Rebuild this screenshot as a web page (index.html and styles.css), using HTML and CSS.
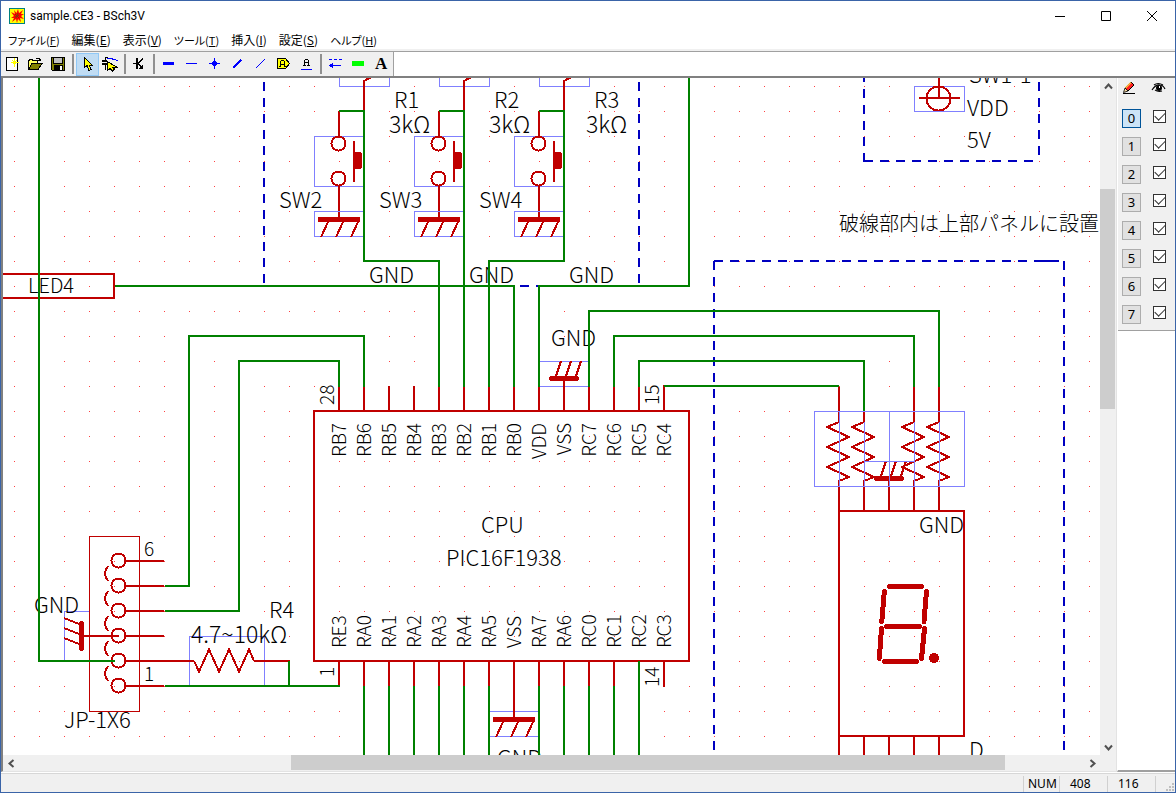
FILE: index.html
```html
<!DOCTYPE html>
<html lang="ja">
<head>
<meta charset="utf-8">
<title>sample.CE3 - BSch3V</title>
<link rel="stylesheet" href="styles.css">
</head>
<body>
<div class="window">
  <header class="titlebar">
    <svg class="app-icon" width="16" height="16" viewBox="0 0 16 16">
      <rect x=".5" y=".5" width="15" height="15" fill="#ffff00" stroke="#008080"/>
      <path d="M2 4l4 2-1-4 2.500 3L9 1l1 4 4-3-2 4 3 0-3 2 3 3-4-1 1 4-3-3-1 4-1-4-4 3 2-4-3 0 3-2z" fill="#ff0000"/>
      <path d="M6 6l4 4M9 5l-2 5M6 9l4-2" stroke="#804000" fill="none"/>
    </svg>
    <h1 class="title">sample.CE3 - BSch3V</h1>
    <div class="win-controls">
      <button type="button" aria-label="最小化"><svg width="12" height="12" viewBox="0 0 12 12"><path d="M1 6.500h10" stroke="#000"/></svg></button>
      <button type="button" aria-label="最大化"><svg width="12" height="12" viewBox="0 0 12 12"><path d="M1.500 1.500h9v9h-9z" stroke="#000" fill="none"/></svg></button>
      <button type="button" aria-label="閉じる"><svg width="12" height="12" viewBox="0 0 12 12"><path d="M1 1l10 10M11 1L1 11" stroke="#000"/></svg></button>
    </div>
  </header>
  <nav class="menubar">
    <button type="button" class="kana">ファイル(<u>F</u>)</button>
    <button type="button">編集(<u>E</u>)</button>
    <button type="button">表示(<u>V</u>)</button>
    <button type="button" class="kana">ツール(<u>T</u>)</button>
    <button type="button">挿入(<u>I</u>)</button>
    <button type="button">設定(<u>S</u>)</button>
    <button type="button" class="kana">ヘルプ(<u>H</u>)</button>
  </nav>
  <div class="toolrow">
    <div class="toolbar" role="toolbar">
      <button type="button" aria-label="新規"><svg viewBox="0 0 16 16"><path d="M2.500 1.500h11v13h-11z" fill="#fff" stroke="#000"/><path d="M10.500 2v9M7 6.500h8M8.500 4.500l4 4M12.500 4.500l-4 4" stroke="#ffff00"/></svg></button>
      <button type="button" aria-label="開く"><svg viewBox="0 0 16 16"><path d="M1.500 13.500v-9h1v-1h3v1h5v3" fill="#ffff60" stroke="#000"/><path d="M1.500 13.500l3.500-6h10l-4 6z" fill="#808000" stroke="#000"/><path d="M9 2.500h3l1 1v1M11 4.500h3" fill="none" stroke="#000"/></svg></button>
      <button type="button" aria-label="保存"><svg viewBox="0 0 16 16"><path d="M1.500 1.500h13v13H2.500l-1-1z" fill="#808000" stroke="#000"/><path d="M4 2h8v5H4z" fill="#c0c0c0"/><path d="M4 9h9v5H4z" fill="#000"/><path d="M10 10h2v4h-2z" fill="#fff"/><path d="M3.500 2v5.500h9V2" stroke="#000" fill="none"/></svg></button>
      <span class="sep"></span>
      <button type="button" class="active" aria-label="選択"><svg viewBox="0 0 16 16"><path d="M5.500 1.500v10l2.500-2 2 5 2-1-2-4.500h3z" fill="#ffff00" stroke="#000"/></svg></button>
      <button type="button" aria-label="ドラッグ"><svg viewBox="0 0 16 16"><path d="M0 5h5M0 8h5" stroke="#000" stroke-width="2"/><path d="M3.500 5V1.500H6M3.500 8v6" stroke="#000" fill="none"/><path d="M5 2.500h4l3 1 4 1" stroke="#0000ff" fill="none"/><path d="M5.500 5.500v9l2.500-2 2.500 2.500 2-2-2-2h4z" fill="#ffff00" stroke="#000"/></svg></button>
      <span class="sep"></span>
      <button type="button" aria-label="部品"><svg viewBox="0 0 16 16"><path d="M5 2h2v11H5zM2 7h3v1H2z" fill="#000"/><path d="M7 7.500l5-5M7 7.500l5 5" stroke="#000"/><path d="M12 8v5H7z" fill="#000"/></svg></button>
      <span class="sep"></span>
      <button type="button" aria-label="バス"><svg viewBox="0 0 16 16"><path d="M3 6h11v3H3z" fill="#0000ff"/></svg></button>
      <button type="button" aria-label="ワイヤ"><svg viewBox="0 0 16 16"><path d="M3 7.500h11" stroke="#0000ff"/></svg></button>
      <button type="button" aria-label="ジャンクション"><svg viewBox="0 0 16 16"><path d="M3 7.500h11M8.500 2v11" stroke="#0000ff"/><circle cx="8.500" cy="7.500" r="2.500" fill="#0000ff"/></svg></button>
      <button type="button" aria-label="バスエントリ"><svg viewBox="0 0 16 16"><path d="M4 12l8-8" stroke="#0000ff" stroke-width="2.500"/></svg></button>
      <button type="button" aria-label="エントリ"><svg viewBox="0 0 16 16"><path d="M4 12l9-9" stroke="#0000ff"/></svg></button>
      <button type="button" aria-label="タグ"><svg viewBox="0 0 16 16"><path d="M2.500 2.500h8l4 5-4 5h-8z" fill="#ffff00" stroke="#000"/><path d="M5 5h1v6H5zM9 5h1v6H9zM6 4h3v1H6zM6 8h3v1H6zM4 10h2v1H4zM9 10h2v1H9z" fill="#000"/></svg></button>
      <button type="button" aria-label="ラベル"><svg viewBox="0 0 16 16"><path d="M6 4h1v6H6zM10 4h1v6h-1zM7 3h3v1H7zM7 6h3v1H7zM5 9h3v1H5zM9 9h3v1H9z" fill="#000"/><path d="M3 13.500h11" stroke="#0000ff"/></svg></button>
      <span class="sep"></span>
      <button type="button" aria-label="破線"><svg viewBox="0 0 16 16"><path d="M2 3.500h13" stroke="#0000ff" stroke-dasharray="3 2"/><path d="M3 9.500h11" stroke="#0000ff"/><path d="M2 9.500l4-3v6z" fill="#0000ff"/></svg></button>
      <button type="button" aria-label="塗り"><svg viewBox="0 0 16 16"><path d="M2 5h12v5H2z" fill="#00ff00"/></svg></button>
      <button type="button" class="text-tool" aria-label="文字">A</button>
    </div>
  </div>
  <main class="workspace">
    <section class="view">
      <div class="canvas-row">
        <svg class="sheet" aria-label="回路図">
          <defs>
            <pattern id="grid" x="14" y="11" width="25" height="25" patternUnits="userSpaceOnUse"><rect width="1" height="1" fill="#ff4040"/></pattern>
            <g id="gnd"><path class="frame" d="M-24.500 -5.500h50v25h-50z"/><path class="bar" d="M-21 2.500h42"/><path class="hatch" d="M-11 5l-7 15M4 5l-7 15M19 5l-7 15"/></g>
            <g id="gnd-up"><path class="hatch" d="M-3 -17l-5 15M7 -17l-5 15M17 -17l-5 15"/><path class="bar round" d="M-12.500 .500h25"/></g>
            <g id="switch"><path class="frame" d="M-24.500 .500h50v50h-50z"/><path class="red" d="M0 -25V1M0 49V81M15 5v41"/><circle class="ring" cx="-.500" cy="7.500" r="7"/><circle class="ring" cx="-.500" cy="42.500" r="7"/><path class="solid" d="M15 16h7l1 2v13l-1 2h-7z"/></g>
            <path id="res-v" class="zig" d="M0 0v1l-12 5 22 10-22 10 22 10-22 10 22 10-10 4v30"/>
            <g id="stub"><path class="frame" d="M-24.500 -10v18.500h50V-10"/><path class="red" d="M0 33V3l11 -6"/></g>
            <g id="pin"><circle class="ring" cx="-.500" cy="-.500" r="7"/><path class="red" d="M7 0h38"/></g>
            <path id="arc" class="ring" d="M4 0Q-2 7.500 4 15"/>
          </defs>
          <g transform="translate(-3,-78)">
            <rect width="4000" height="3000" fill="url(#grid)"/>
            <g class="dash">
              <path d="M264 66V285M639 66V285"/><path d="M520 286h9M536 286h4"/>
              <path d="M864 73V162M864 161h175M1039 66V156"/>
              <path d="M714 261h350M714 261V2000M1064 261V2000"/><path class="joined" d="M1035 261h21"/>
            </g>
            <use href="#stub" x="364" y="78"/><use href="#stub" x="464" y="78"/><use href="#stub" x="564" y="78"/>
            <use href="#switch" x="339" y="136"/><use href="#switch" x="439" y="136"/><use href="#switch" x="539" y="136"/>
            <use href="#gnd" x="339" y="217"/><use href="#gnd" x="439" y="217"/><use href="#gnd" x="539" y="217"/>
            <use href="#gnd" x="514" y="717"/>
            <path class="frame" d="M539.500 361.500h50v25h-50zM64.500 611.500h25v49h-25zM189.500 636.500h75v50h-75zM914.500 86.500h50v25h-50z"/>
            <path class="red" d="M-5 274H114V298H-5M314 411H689V661H314ZM839 510V800M839 511H964V736H839M864 736v60M889 736v60M914 736v60M939 736v60"/>
            <path class="red" d="M339 386v25M364 386v25M389 386v25M414 386v25M439 386v25M464 386v25M489 386v25M514 386v25M539 386v25M564 380v31M589 386v25M614 386v25M639 386v25M664 385v26"/>
            <path class="red" d="M339 661v25M364 661v25M389 661v25M414 661v25M439 661v25M464 661v25M489 661v25M514 661v57M539 661v25M564 661v25M589 661v25M614 661v25M664 661v26"/>
            <path class="red" d="M839 387v34M864 411v10M914 387v34M939 387v34M889 480v31M939 78v20M919 98h41M84 636h35M164 661h30M254 661h36"/>
            <g class="labels">
              <text x="969" y="83">SW1-1</text><text x="967" y="116">VDD</text><text x="967" y="148">5V</text>
              <text x="394" y="108">R1</text><text x="494" y="108">R2</text><text x="594" y="108">R3</text>
              <text x="389" y="133" class="value">3kΩ</text><text x="489" y="133" class="value">3kΩ</text><text x="586" y="133" class="value">3kΩ</text>
              <text x="279" y="208">SW2</text><text x="379" y="208">SW3</text><text x="479" y="208">SW4</text>
              <text x="369" y="283">GND</text><text x="469" y="283">GND</text><text x="569" y="283">GND</text>
              <text x="551" y="346">GND</text><text x="28" y="293" class="note">LED4</text>
              <text x="481" y="533">CPU</text><text x="446" y="566">PIC16F1938</text>
              <text x="919" y="533">GND</text><text x="34" y="613">GND</text><text x="269" y="618">R4</text>
              <text x="191" y="643" class="value">4.7~10kΩ</text><text x="64" y="728">JP-1X6</text>
              <text x="969" y="758">D</text><text x="497" y="766">GND</text>
              <text x="144" y="556" class="small">6</text><text x="144" y="681" class="small">1</text>
              <text x="839" y="231" class="note">破線部内は上部パネルに設置</text>
            </g>
            <g class="labels pins" text-anchor="end">
              <text transform="translate(346,423) rotate(-90)">RB7</text><text transform="translate(371,423) rotate(-90)">RB6</text><text transform="translate(396,423) rotate(-90)">RB5</text><text transform="translate(421,423) rotate(-90)">RB4</text><text transform="translate(446,423) rotate(-90)">RB3</text><text transform="translate(471,423) rotate(-90)">RB2</text><text transform="translate(496,423) rotate(-90)">RB1</text><text transform="translate(521,423) rotate(-90)">RB0</text><text transform="translate(546,423) rotate(-90)">VDD</text><text transform="translate(571,423) rotate(-90)">VSS</text><text transform="translate(596,423) rotate(-90)">RC7</text><text transform="translate(621,423) rotate(-90)">RC6</text><text transform="translate(646,423) rotate(-90)">RC5</text><text transform="translate(671,423) rotate(-90)">RC4</text>
            </g>
            <g class="labels pins">
              <text transform="translate(346,648) rotate(-90)">RE3</text><text transform="translate(371,648) rotate(-90)">RA0</text><text transform="translate(396,648) rotate(-90)">RA1</text><text transform="translate(421,648) rotate(-90)">RA2</text><text transform="translate(446,648) rotate(-90)">RA3</text><text transform="translate(471,648) rotate(-90)">RA4</text><text transform="translate(496,648) rotate(-90)">RA5</text><text transform="translate(521,648) rotate(-90)">VSS</text><text transform="translate(546,648) rotate(-90)">RA7</text><text transform="translate(571,648) rotate(-90)">RA6</text><text transform="translate(596,648) rotate(-90)">RC0</text><text transform="translate(621,648) rotate(-90)">RC1</text><text transform="translate(646,648) rotate(-90)">RC2</text><text transform="translate(671,648) rotate(-90)">RC3</text>
              <text transform="translate(334,405) rotate(-90)">28</text><text transform="translate(659,405) rotate(-90)">15</text><text transform="translate(334,677) rotate(-90)">1</text><text transform="translate(659,687) rotate(-90)">14</text>
            </g>
            <use href="#res-v" x="839" y="421"/><use href="#res-v" x="864" y="421"/><use href="#res-v" x="914" y="421"/><use href="#res-v" x="939" y="421"/>
            <use href="#gnd-up" x="564" y="378"/><use href="#gnd-up" x="889" y="478"/>
            <path class="frame" d="M814.500 411.500h150v75h-150zM839.500 411v75M864.500 422v64M889.500 411v75M914.500 422v64M939.500 422v64M864 461.500h50"/>
            <path class="zig" d="M194 661l5 10.500 10-22 10 22 10-22 10 22 10-22 5 11.500"/>
            <circle class="ring" cx="938.500" cy="98.500" r="12"/>
            <path class="thin" d="M89.500 536.500h50v175h-50z"/>
            <use href="#pin" x="119" y="561"/><use href="#pin" x="119" y="586"/><use href="#pin" x="119" y="611"/><use href="#pin" x="119" y="636"/><use href="#pin" x="119" y="661"/><use href="#pin" x="119" y="686"/>
            <use href="#arc" x="104" y="566"/><use href="#arc" x="104" y="591"/><use href="#arc" x="104" y="616"/><use href="#arc" x="104" y="641"/><use href="#arc" x="104" y="666"/>
            <path class="bar round" d="M81.500 623.500v25"/><path class="hatch" d="M64 618l15 6M64 628l15 6M64 638l15 6"/>
            <path class="digit" d="M889.500 586.500h32M886.500 626.500h33M884.500 661.500h32M884.300 591.500l-2.500 30M926.500 591.500l-2.500 30M881.500 628.500l-2.200 30M924.500 628.500l-3 30"/>
            <circle class="solid" cx="934" cy="658" r="5"/>
            <path class="green" d="M39 70V661H115M115 286H514V387M539 387V286H689V70M339 111H364V261H439V387M439 111H464V387M539 111H564V261H489V387M165 586H189V336H364V387M165 611H239V361H339V387M165 686H340M289 661V686M589 387V311H939V387M614 387V336H914V387M639 387V361H864V411M664 386H839"/>
            <path class="green" d="M364 686V800M389 686V800M414 686V800M439 686V800M464 686V800M489 686V800M539 686V800M564 686V800M589 686V800M614 686V800M639 661V800"/>
          </g>
        </svg>
        <div class="scroll vertical">
          <button type="button" aria-label="上へ"><svg width="9" height="9" viewBox="0 0 9 9"><path d="M1 6.500l3.500-4 3.500 4" fill="none" stroke="#505050" stroke-width="2"/></svg></button>
          <div class="track"><div class="thumb"></div></div>
          <button type="button" aria-label="下へ"><svg width="9" height="9" viewBox="0 0 9 9"><path d="M1 2.500l3.500 4 3.500-4" fill="none" stroke="#505050" stroke-width="2"/></svg></button>
        </div>
      </div>
      <div class="scroll horizontal">
        <button type="button" aria-label="左へ"><svg width="9" height="9" viewBox="0 0 9 9"><path d="M6.500 1l-4 3.500 4 3.500" fill="none" stroke="#505050" stroke-width="2"/></svg></button>
        <div class="track"><div class="thumb"></div></div>
        <button type="button" aria-label="右へ"><svg width="9" height="9" viewBox="0 0 9 9"><path d="M2.500 1l4 3.500-4 3.500" fill="none" stroke="#505050" stroke-width="2"/></svg></button>
      </div>
    </section>
    <aside class="side">
      <div class="layers">
        <div class="layer-head">
          <svg width="14" height="14" viewBox="0 0 14 14"><path d="M9 1l3 3-6 6-3-3z" fill="#ff2020" stroke="#000"/><path d="M9 1.500L3.500 7" stroke="#ffc040" stroke-width="1.500"/><path d="M3 7l3 3-4.500 1.500z" fill="#f8d8a0" stroke="#000" stroke-width=".8"/><path d="M1 12.500h12" stroke="#000" shape-rendering="crispEdges"/></svg>
          <svg width="15" height="14" viewBox="0 0 15 14"><path d="M1 9Q5 3 9 4Q12 4 14 8M4 9Q7 11 11 10" fill="none" stroke="#000" stroke-width="1.200"/><path d="M3 4Q7 1 12 4" fill="none" stroke="#000" stroke-width="1.200"/><circle cx="8" cy="7" r="3" fill="#000"/><path d="M8 5h1v2H8z" fill="#fff"/></svg>
        </div>
        <div class="layer"><button type="button" class="current">0</button><input type="checkbox" aria-label="レイヤー0" checked></div>
        <div class="layer"><button type="button">1</button><input type="checkbox" aria-label="レイヤー1" checked></div>
        <div class="layer"><button type="button">2</button><input type="checkbox" aria-label="レイヤー2" checked></div>
        <div class="layer"><button type="button">3</button><input type="checkbox" aria-label="レイヤー3" checked></div>
        <div class="layer"><button type="button">4</button><input type="checkbox" aria-label="レイヤー4" checked></div>
        <div class="layer"><button type="button">5</button><input type="checkbox" aria-label="レイヤー5" checked></div>
        <div class="layer"><button type="button">6</button><input type="checkbox" aria-label="レイヤー6" checked></div>
        <div class="layer"><button type="button">7</button><input type="checkbox" aria-label="レイヤー7" checked></div>
      </div>
    </aside>
  </main>
  <footer class="status">
    <span class="cell num">NUM</span><span class="cell">408</span><span class="cell">116</span>
    <span class="grip"><svg width="10" height="10" viewBox="0 0 10 10"><path d="M7 1h2v2H7zM4 4h2v2H4zM7 4h2v2H7zM1 7h2v2H1zM4 7h2v2H4zM7 7h2v2H7z" fill="#bfbfbf"/></svg></span>
  </footer>
</div>
</body>
</html>
```
FILE: styles.css
```css
* { box-sizing: border-box; }
body { margin: 0; font: 12px/16px "Noto Sans", "Noto Sans CJK JP", sans-serif; color: #000; }
button { font: inherit; color: inherit; border: 0; padding: 0; background: none; }
svg { display: block; flex: none; }

.window { display: flex; flex-direction: column; height: 100vh; border: 1px solid #3a64a8; background: #fff; overflow: hidden; }

.titlebar { display: flex; align-items: center; height: 29px; flex: none; padding-left: 8px; }
.title { margin: 0 auto 0 5px; font-size: 12px; font-weight: 400; font-family: Roboto, sans-serif; }
.win-controls { display: flex; }
.win-controls button { width: 46px; height: 29px; display: grid; place-items: center; }

.menubar { display: flex; gap: 12px; height: 21px; flex: none; padding-left: 7px; border-bottom: 2px solid #f0f0f0; font-feature-settings: "palt"; font-family: "Noto Sans CJK JP", sans-serif; }
.menubar button { white-space: nowrap; }
.menubar .kana { font-size: 11px; }

.toolrow { display: flex; flex: none; height: 27px; border-top: 1px solid #a0a0a0; border-bottom: 2px solid #808080; background: #fff; }
.toolbar { display: flex; align-items: center; background: #f0f0f0; border-right: 1px solid #a0a0a0; }
.toolbar button { width: 23px; height: 23px; display: grid; place-items: center start; padding-left: 3px; }
.toolbar svg { width: 16px; height: 16px; shape-rendering: crispEdges; }
.toolbar .active { background: #c0dcf3; border: 1px solid #90c8f6; padding-left: 2px; }
.toolbar .text-tool { font: 700 17px/20px "Liberation Serif", serif; padding-left: 5px; }
.sep { width: 2px; height: 20px; margin: 0 2px; background: #909090; }

.workspace { display: flex; flex: 1; min-height: 0; }
.view { display: flex; flex-direction: column; flex: 1; min-width: 0; border-left: 2px solid #808080; border-right: 1px solid #e3e3e3; border-bottom: 1px solid #e3e3e3; }
.canvas-row { display: flex; flex: 1; min-height: 0; }
.sheet { flex: 1; min-width: 0; height: 100%; overflow: hidden; shape-rendering: crispEdges; }

.scroll { display: flex; background: #f0f0f0; flex: none; }
.scroll button { width: 16px; height: 16px; flex: none; display: grid; place-items: center; }
.scroll .track { display: flex; flex: 1; min-width: 0; min-height: 0; }
.thumb { background: #cdcdcd; }
.vertical { flex-direction: column; width: 16px; }
.vertical .track { flex-direction: column; padding-top: 95px; }
.vertical .thumb { width: 15px; height: 40%; }
.horizontal { height: 16px; padding-right: 16px; }
.horizontal .track { padding-left: 272px; }
.horizontal .thumb { width: 90%; height: 15px; margin-right: 77px; }

.red, .green, .ring, .zig, .hatch, .bar, .digit, .dash path { fill: none; stroke: #c00000; stroke-width: 2; }
.green { stroke: #008000; }
.dash path { stroke: #0000c0; stroke-dasharray: 9 7; }
.dash .joined { stroke-dasharray: none; }
.frame { fill: none; stroke: #8080ff; stroke-width: 1; }
.thin { fill: none; stroke: #c00000; stroke-width: 1; }
.bar, .digit { stroke-width: 5; }
.round, .digit { stroke-linecap: round; }
.solid { fill: #c00000; }
.labels { font: 300 22px "Noto Sans CJK JP", sans-serif; }
.labels .small, .pins { font-size: 19px; }
.labels .note { font-size: 20px; }
.labels .value { font-size: 23px; }

.side { width: 58px; flex: none; border-left: 1px solid #fff; border-bottom: 2px solid #a0a0a0; }
.layers { background: #f0f0f0; border-bottom: 1px solid #a0a0a0; padding: 3px 9px 2px 4px; }
.layer-head { display: flex; justify-content: space-between; height: 23px; }
.layer { display: flex; justify-content: space-between; align-items: flex-start; height: 28px; padding-top: 5px; }
.layer button { width: 19px; height: 19px; border: 1px solid #adadad; background: #e1e1e1; font-size: 13px; line-height: 17px; }
.layer .current { border-color: #005499; background: #cce4f7; }
.layer input { appearance: none; width: 13px; height: 13px; margin: 1px 0 0; border: 1px solid #333; background: #fff; display: grid; place-items: center; }
.layer input:checked::before { content: ""; width: 9px; height: 5px; border: solid #333; border-width: 0 0 1px 1px; transform: rotate(-45deg); margin-bottom: 3px; }

.status { display: flex; justify-content: flex-end; height: 19px; flex: none; margin-top: 1px; border-top: 1px solid #d7d7d7; background: #f0f0f0; padding-top: 2px; }
.cell { width: 48px; padding-left: 10px; border-left: 1px solid #d0d0d0; }
.num { width: 36px; padding-left: 4px; }
.grip { width: 20px; border-left: 1px solid #d0d0d0; padding: 6px 0 0 9px; }
```
